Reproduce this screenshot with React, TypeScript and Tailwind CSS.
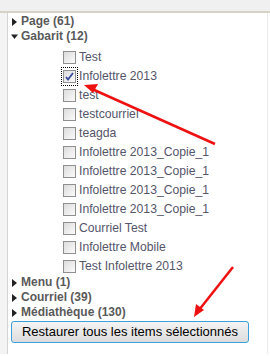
import { useState } from 'react'

const items = [
  { label: 'Test', checked: false },
  { label: 'Infolettre 2013', checked: true },
  { label: 'test', checked: false },
  { label: 'testcourriel', checked: false },
  { label: 'teagda', checked: false },
  { label: 'Infolettre 2013_Copie_1', checked: false },
  { label: 'Infolettre 2013_Copie_1', checked: false },
  { label: 'Infolettre 2013_Copie_1', checked: false },
  { label: 'Infolettre 2013_Copie_1', checked: false },
  { label: 'Courriel Test', checked: false },
  { label: 'Infolettre Mobile', checked: false },
  { label: 'Test Infolettre 2013', checked: false },
]

function Arrow({ open }: { open: boolean }) {
  return open ? (
    <svg width="7" height="7" viewBox="0 0 7 7" className="mr-[3px] shrink-0">
      <path d="M0 1.5h7L3.5 6z" fill="#222" />
    </svg>
  ) : (
    <svg width="7" height="8" viewBox="0 0 7 8" className="mr-[3px] shrink-0">
      <path d="M1 0v8l5-4z" fill="#222" />
    </svg>
  )
}

function Box({ checked, focused }: { checked: boolean; focused: boolean }) {
  return (
    <span
      className={
        'flex h-[19px] w-[17px] items-center justify-center ' +
        (focused ? 'outline outline-1 outline-dotted outline-black -outline-offset-1' : '')
      }
    >
      <span className="flex h-[13px] w-[13px] items-center justify-center border border-[#8f8f8f] bg-gradient-to-br from-[#dcdcdc] to-[#fbfbfb]">
        {checked && (
          <svg width="9" height="9" viewBox="0 0 9 9">
            <path d="M1 5l2 2.5L8 1" stroke="#3a4a9a" strokeWidth="1.8" fill="none" />
          </svg>
        )}
      </span>
    </span>
  )
}

function Header({ label, open }: { label: string; open?: boolean }) {
  return (
    <div className="flex h-[15px] items-center font-bold text-[#5a5a5a]">
      <Arrow open={!!open} />
      <span>{label}</span>
    </div>
  )
}

export default function App() {
  const [list, setList] = useState(items)

  return (
    <div className="relative h-[356px] w-[270px] overflow-hidden bg-white font-['Liberation_Sans',Arial,sans-serif] text-[12px] leading-[15px]">
      <div className="h-[13px] border-b-2 border-[#d6d3c6] bg-[#f0f0f0]" />
      <div className="flex h-[341px]">
        <div className="w-[8px] border-r border-[#d4d4d4] bg-[#f4f4f4]" />
        <div className="flex-1 pl-[3px] pt-[1px]">
          <Header label="Page (61)" />
          <Header label="Gabarit (12)" open />
          <div className="pl-[50px] pt-[4px]">
            {list.map((it, i) => (
              <div key={i} className="flex h-[19px] items-center text-[12.2px] text-[#55556a]">
                <Box checked={it.checked} focused={i === 1} />
                <span className="ml-[1px]">{it.label}</span>
              </div>
            ))}
          </div>
          <div className="-mt-[1px]">
            <Header label="Menu (1)" />
            <Header label="Courriel (39)" />
            <Header label="Médiathèque (130)" />
          </div>
          <button
            onClick={() => setList(list.map((x) => ({ ...x, checked: false })))}
            className="mt-[1px] h-[22px] w-[238px] rounded-[3px] border border-[#3c9fd8] bg-gradient-to-b from-[#f4f4f4] to-[#dcdcdc] text-center text-[13px] leading-[20px] text-black"
          >
            Restaurer tous les items sélectionnés
          </button>
        </div>
        <div className="w-[3px] border-l border-[#ececec]" />
      </div>

      <svg className="pointer-events-none absolute left-0 top-0" width="270" height="356">
        <line x1="215" y1="144" x2="92" y2="89" stroke="#ee1111" strokeWidth="2.5" />
        <path d="M84 85l14 -1l-5 9z" fill="#ee1111" />
        <line x1="233" y1="267" x2="199" y2="310" stroke="#ee1111" strokeWidth="2.5" />
        <path d="M194 317l2 -13l8 6z" fill="#ee1111" />
      </svg>
    </div>
  )
}
